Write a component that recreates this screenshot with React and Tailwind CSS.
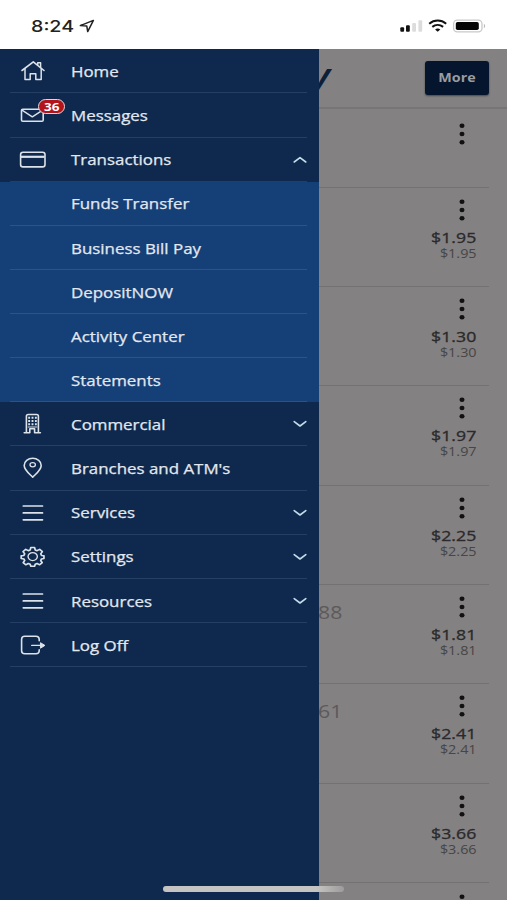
import React from "react";

const line = {
  fill: "none",
  stroke: "currentColor",
  strokeWidth: 1.6,
  strokeLinecap: "round",
  strokeLinejoin: "round",
};

function Icon({ children }) {
  return (
    <svg width="28" height="26" viewBox="0 0 28 26" className="mt-px block shrink-0 text-[#dbe2ea]" {...line}>
      {children}
    </svg>
  );
}

function HomeIcon() {
  return (
    <Icon>
      <path d="M3 12.5 14.3 3.8 25 12.5" />
      <path d="M6 11v10.5h5.2v-5.8h5.6v5.8h5.4V11M18.7 6.6V4.7h2.9v4.8" strokeWidth="1.5" />
    </Icon>
  );
}

function MailIcon() {
  return (
    <Icon>
      <rect x="2.5" y="7.2" width="21.7" height="12" rx="1.3" />
      <path d="m3 8.1 10.3 6.8L23.7 8.1" strokeWidth="1.4" />
    </Icon>
  );
}

function CardIcon() {
  return (
    <Icon>
      <rect x="1.6" y="5.2" width="24.4" height="14.7" rx="2.4" />
      <path d="M2 9.8h23.6" strokeWidth="2.2" strokeLinecap="butt" />
    </Icon>
  );
}

function BuildingIcon() {
  return (
    <Icon>
      <path d="M7.4 21.4V5.2q0-1.7 1.7-1.7h8.6q1.7 0 1.7 1.7v16.2M5.2 21.8h5.6v-4h4.8v4h5.8" />
      <path d="M9.2 6.7h8.6M9.2 10h8.6M9.2 13.3h8.6" strokeWidth="2" strokeDasharray="1.9 1.45" strokeLinecap="butt" />
      <path d="M9.2 16h8.6" strokeWidth="1" />
    </Icon>
  );
}

function PinIcon() {
  return (
    <Icon>
      <path d="M13.7 22.2C11 19.2 5.2 15 5.2 10.4c0-4 3.8-7.1 8.5-7.1s8.5 3.1 8.5 7.1c0 4.6-5.8 8.8-8.5 11.8Z" />
      <ellipse cx="13.7" cy="9.8" rx="2.7" ry="2.1" strokeWidth="1.3" />
    </Icon>
  );
}

function MenuIcon() {
  return (
    <Icon>
      <path d="M4.3 6h19.2M4.3 12.9h19.2M4.3 19.8h19.2" strokeWidth="1.7" />
    </Icon>
  );
}

function GearIcon() {
  return (
    <Icon>
      <g transform="translate(13.7 12.6) scale(1.16 1)">
        <path
          strokeWidth="1.5"
          d="M-1.6-9.1h3.2l.6 2.5 1.6.7 2.2-1.4 2.3 2.3-1.4 2.2.7 1.6 2.1.4v2.6l-2.1.5-.7 1.6 1.3 2.1-2.2 2.2-2.2-1.3-1.6.7-.6 2.1h-3.2l-.6-2.1-1.6-.7-2.2 1.3-2.2-2.2 1.3-2.1-.7-1.6-2.3-.5v-2.6l2.3-.4.7-1.6L-8.3-5-6-7.3l2.2 1.4 1.6-.7Z"
        />
        <circle r="4" strokeWidth="1.2" />
      </g>
    </Icon>
  );
}

function LogOffIcon() {
  return (
    <Icon>
      <path d="M20.2 8.7V7.6q0-3.4-3.3-3.4H5.8q-3.2 0-3.2 3v11.5q0 3 3.2 3h11.1q3.3 0 3.3-3.3v-.7" />
      <path d="M12.7 13.4h9" strokeWidth="1.4" />
      <path d="m21.8 10.9 4.1 2.5-4.1 2.6Z" fill="currentColor" strokeWidth="1" />
    </Icon>
  );
}

function Chevron({ up }) {
  return (
    <svg width="14" height="8" viewBox="0 0 14 8" className="block shrink-0 text-[#c3dcea]" {...line}>
      <path d={up ? "M1.2 6 7 1.6l5.8 4.4" : "M1.2 1.6 7 6l5.8-4.4"} />
    </svg>
  );
}

const topItems = [
  { label: "Home", icon: HomeIcon },
  { label: "Messages", icon: MailIcon, badge: "36" },
  { label: "Transactions", icon: CardIcon, chevron: "up" },
];

const subItems = ["Funds Transfer", "Business Bill Pay", "DepositNOW", "Activity Center", "Statements"];

const bottomItems = [
  { label: "Commercial", icon: BuildingIcon, chevron: "down" },
  { label: "Branches and ATM's", icon: PinIcon },
  { label: "Services", icon: MenuIcon, chevron: "down" },
  { label: "Settings", icon: GearIcon, chevron: "down" },
  { label: "Resources", icon: MenuIcon, chevron: "down" },
  { label: "Log Off", icon: LogOffIcon },
];

function MenuRow({ item, sub }) {
  const Glyph = item.icon;
  return (
    <div
      className={
        "ml-[10px] mr-[12px] flex h-[44.13px] items-center border-b " +
        (sub ? "border-[#2a5386]" : "border-[#243f63]")
      }
    >
      <div className="relative flex w-[61px] shrink-0 pl-[9px]">
        {Glyph && <Glyph />}
        {item.badge && (
          <span className="absolute -top-[2px] left-[28px] flex h-[15px] w-[27px] items-center justify-center rounded-full border border-[#e6d5da] bg-[#b3141c] text-[10px] font-bold leading-none text-white">
            <span className="scale-x-[1.35]">{item.badge}</span>
          </span>
        )}
      </div>
      <span className="origin-left scale-x-[1.165] whitespace-nowrap pt-[3px] text-[14.5px] font-medium leading-none text-[#e3e8ef] [-webkit-text-stroke:0.25px_#e3e8ef]">
        {item.label}
      </span>
      {item.chevron && (
        <span className="ml-auto pt-px">
          <Chevron up={item.chevron === "up"} />
        </span>
      )}
    </div>
  );
}

function Dots() {
  return (
    <svg width="8" height="22" viewBox="0 0 8 22" className="block" fill="#111112">
      <ellipse cx="4" cy="2.7" rx="2.5" ry="2.2" />
      <ellipse cx="4" cy="11" rx="2.5" ry="2.2" />
      <ellipse cx="4" cy="19.3" rx="2.5" ry="2.2" />
    </svg>
  );
}

const accounts = [
  { amount: "$1.95" },
  { amount: "$1.30" },
  { amount: "$1.97" },
  { amount: "$2.25" },
  { amount: "$1.81", digits: "88" },
  { amount: "$2.41", digits: "61" },
  { amount: "$3.66" },
];

function AccountRow({ amount, digits }) {
  return (
    <div className="mr-[18px] flex h-[99.3px] shrink-0 justify-between border-b border-[#737172]">
      <span className="-ml-px mt-[16px] origin-left scale-x-[1.18] text-[18px] leading-[22px] text-[#5c5a5b]">{digits}</span>
      <div className="flex flex-col items-end pr-[12.5px] pt-[11px]">
        <div className="mr-[10.5px]">
          <Dots />
        </div>
        <span className="mt-[8px] origin-right scale-x-[1.18] text-[15px] font-medium leading-[17px] text-[#2b292a] [-webkit-text-stroke:0.3px_#2b292a]">{amount}</span>
        <span className="mt-[1px] origin-right scale-x-[1.2] text-[12px] leading-[14px] text-[#474546]">{amount}</span>
      </div>
    </div>
  );
}

function StatusBar() {
  return (
    <div className="flex h-[49.3px] shrink-0 items-center justify-between bg-white pl-[31px] pr-[20px] pt-[2px]">
      <div className="flex items-center">
        <span className="w-[48px] whitespace-nowrap font-['Inter'] text-[16px] font-medium leading-none text-[#222]">
          <span className="inline-block origin-left scale-x-[1.23]">8:24</span>
        </span>
        <svg width="16" height="14" viewBox="0 0 16 14" fill="none" stroke="#222" strokeWidth="1.5" strokeLinejoin="round">
          <path d="M14.4 1.4 1.3 6.6l6.5.5.9 5.5Z" />
        </svg>
      </div>
      <svg width="88" height="16" viewBox="0 0 88 16" className="block">
        <rect x="1.3" y="9.3" width="3.8" height="4.4" rx="1" fill="#111" />
        <rect x="7" y="7.3" width="3.8" height="6.4" rx="1" fill="#111" />
        <rect x="13.2" y="5" width="3.8" height="8.7" rx="1" fill="#dcdcdc" />
        <rect x="19.4" y="2.3" width="3.8" height="11.4" rx="1" fill="#dcdcdc" />
        <g fill="none" stroke="#111" strokeWidth="2">
          <path d="M30.2 5.7c5-4.2 12-4.2 17 0" />
          <path d="M33.3 8.9c3.2-2.6 7.6-2.6 10.8 0" />
        </g>
        <path d="m38.7 13.7-2.6-2.3c1.5-1.2 3.7-1.2 5.2 0Z" fill="#111" />
        <rect x="54.6" y="2.1" width="28.4" height="11.8" rx="3.6" fill="#fff" stroke="#c9c9c9" strokeWidth="1.3" />
        <rect x="56.8" y="4" width="23" height="8" rx="1.8" fill="#050505" />
        <path d="M84.9 6v4c1.6-.4 1.6-3.6 0-4Z" fill="#bbb" />
      </svg>
    </div>
  );
}

export default function App() {
  return (
    <div className="relative flex h-[900px] w-[507px] flex-col overflow-hidden bg-[#838182] font-['Open_Sans','Noto_Sans',sans-serif]">
      <StatusBar />
      <div className="flex min-h-0 flex-1">
        <nav className="flex w-[318.6px] shrink-0 flex-col bg-[#0e294d]">
          {topItems.map((item) => (
            <MenuRow key={item.label} item={item} />
          ))}
          <div className="bg-[#153f77]">
            {subItems.map((label) => (
              <MenuRow key={label} item={{ label }} sub />
            ))}
          </div>
          {bottomItems.map((item) => (
            <MenuRow key={item.label} item={item} />
          ))}
        </nav>
        <main className="flex min-w-0 flex-1 flex-col overflow-hidden">
          <header className="flex h-[59.5px] shrink-0 justify-between border-b-2 border-[#777576] pr-[18px]">
            <span className="-ml-[8.5px] mt-[4px] origin-left scale-x-[1.2] text-[34px] font-semibold italic leading-[44px] text-[#0c2139]">y</span>
            <button className="mt-[12px] flex h-[34px] w-[64px] items-center justify-center rounded-[3px] bg-[#06152e] text-[13px] font-bold text-[#9b9c9f] shadow-[0_1px_2px_#454748]">
              <span className="-translate-y-px scale-x-[1.1]">More</span>
            </button>
          </header>
          <div className="mr-[18px] flex h-[79px] shrink-0 justify-end border-b border-[#737172] pr-[23px] pt-[14.5px]">
            <Dots />
          </div>
          {accounts.map((account) => (
            <AccountRow key={account.amount} {...account} />
          ))}
          <div className="flex shrink-0 justify-end pr-[41px] pt-[11px]">
            <Dots />
          </div>
        </main>
      </div>
      <div className="absolute left-[163px] top-[886px] h-[6px] w-[181px] rounded-full bg-linear-to-r from-[#c5c4c3] from-85% to-[#9d9b9b]" />
    </div>
  );
}
